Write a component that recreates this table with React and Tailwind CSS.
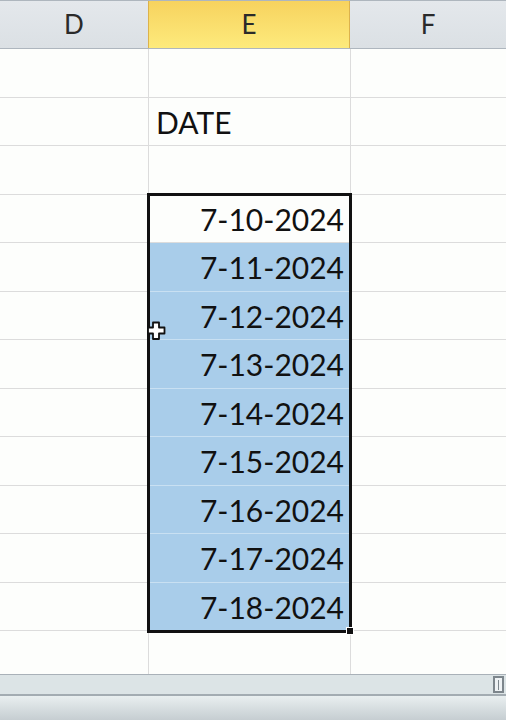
import React from 'react'

const dates = ['7-10-2024', '7-11-2024', '7-12-2024', '7-13-2024', '7-14-2024', '7-15-2024', '7-16-2024', '7-17-2024', '7-18-2024']

// row heights alternate so lines land on the screenshot's 48.5px pitch
const rows = [
  { h: 'h-[49px]', e: '' },
  { h: 'h-[48px]', e: 'DATE' },
  { h: 'h-[49px]', e: '' },
  ...dates.map((d, i) => ({ h: i % 2 === 0 ? 'h-[48px]' : 'h-[49px]', e: d, date: true, sel: i > 0 })),
]

export default function App() {
  return (
    <div className="relative w-[506px] h-[720px] overflow-hidden bg-[#fdfefc] font-['Lato','Open_Sans',sans-serif] text-[#111]">
      {/* column header */}
      <div className="flex h-[49px] border-t border-b border-[#aeb6be] bg-gradient-to-b from-[#e4e8ec] to-[#dbe0e4] text-[26px] text-[#2a2a2a]">
        <div className="w-[149px] flex items-center justify-center border-r border-[#c5ccd2]">D</div>
        <div className="w-[202px] flex items-center justify-center border-x border-[#dcb24c] bg-gradient-to-b from-[#f7d35e] to-[#fdea7c] -ml-px">E</div>
        <div className="flex-1 flex items-center justify-center">F</div>
      </div>

      {rows.map((r, i) => (
        <div key={i} className={`flex ${r.h}`}>
          <div className="w-[149px] border-r border-b border-[#dcdcdc]" />
          <div
            className={`w-[202px] border-r border-b flex items-center text-[30px] leading-none ${
              r.sel ? 'bg-[#a9cdea] border-b-[#c9e0f2] border-r-[#dcdcdc]' : 'border-[#dcdcdc]'
            } ${r.date ? 'justify-end pr-[6px]' : 'pl-[7px]'}`}
          >
            {r.e}
          </div>
          <div className="flex-1 border-b border-[#dcdcdc]" />
        </div>
      ))}

      {/* partial last row */}
      <div className="flex h-[44px] border-b border-[#a9b1b8]">
        <div className="w-[149px] border-r border-[#dcdcdc]" />
        <div className="w-[202px] border-r border-[#dcdcdc]" />
        <div className="flex-1" />
      </div>

      {/* horizontal scrollbar */}
      <div className="flex h-[21px] bg-[#dce4e6] border-b-2 border-[#a3acb2] justify-end items-stretch pr-[2px] py-px">
        <div className="w-[11px] border-2 border-[#7d868c] bg-[#eef2f4] flex items-center justify-center">
          <div className="w-px h-[10px] bg-[#7d868c]" />
        </div>
      </div>
      <div className="h-[26px] bg-gradient-to-b from-[#e9eff0] to-[#c3cbcf]" />

      {/* selection outline */}
      <div className="absolute left-[147px] top-[193px] w-[205px] h-[440px] border-[3px] border-[#111]" />
      <div className="absolute left-[346px] top-[627px] w-[8px] h-[8px] bg-[#111] border border-white" />

      {/* cursor */}
      <svg className="absolute left-[147px] top-[321px]" width="20" height="20" viewBox="0 0 20 20">
        <path d="M6 1.5h6v5h5.5v6H12V18H6v-5.5H1v-6h5z" fill="#fff" stroke="#111" strokeWidth="1.8" strokeLinejoin="round" />
      </svg>
    </div>
  )
}
